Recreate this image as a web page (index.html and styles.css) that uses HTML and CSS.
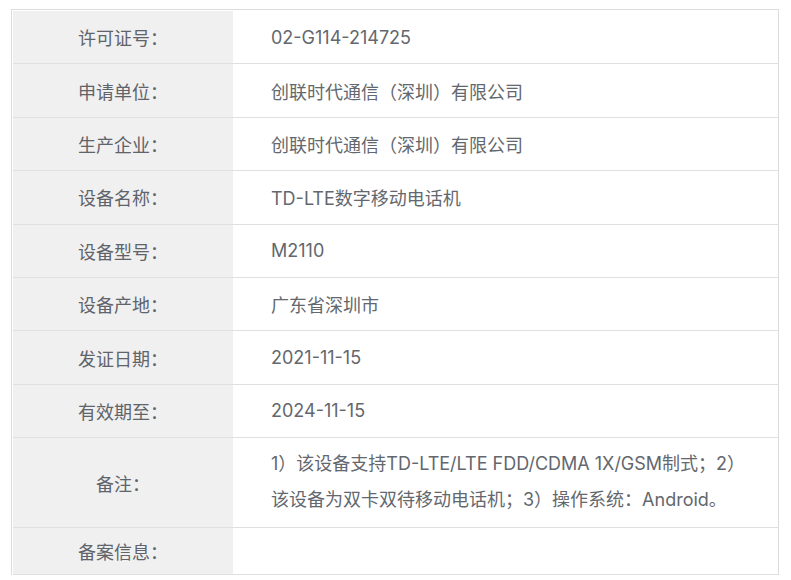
FILE: index.html
```html
<!DOCTYPE html>
<html lang="zh-CN">
<head>
<meta charset="utf-8">
<title>许可证信息</title>
<link rel="stylesheet" href="styles.css">
</head>
<body>
<div class="info">
  <div class="row"><div class="label">许可证号：</div><div class="value">02-G114-214725</div></div>
  <div class="row"><div class="label">申请单位：</div><div class="value">创联时代通信（深圳）有限公司</div></div>
  <div class="row"><div class="label">生产企业：</div><div class="value">创联时代通信（深圳）有限公司</div></div>
  <div class="row"><div class="label">设备名称：</div><div class="value">TD-LTE数字移动电话机</div></div>
  <div class="row"><div class="label">设备型号：</div><div class="value">M2110</div></div>
  <div class="row"><div class="label">设备产地：</div><div class="value">广东省深圳市</div></div>
  <div class="row"><div class="label">发证日期：</div><div class="value">2021-11-15</div></div>
  <div class="row"><div class="label">有效期至：</div><div class="value">2024-11-15</div></div>
  <div class="row row-note"><div class="label">备注：</div><div class="value">1）该设备支持TD-LTE/LTE FDD/CDMA 1X/GSM制式；2）该设备为双卡双待移动电话机；3）操作系统：Android。</div></div>
  <div class="row row-last"><div class="label">备案信息：</div><div class="value"></div></div>
</div>
</body>
</html>
```

FILE: styles.css
```css
html, body {
  margin: 0;
  padding: 0;
  background: #ffffff;
}

body {
  padding: 9px 10px 0 11px;
  font-family: "Inter", "Noto Sans CJK SC", sans-serif;
  font-size: 18px;
  font-weight: 400;
  color: #63676e;
}

.info {
  width: 768px;
  box-sizing: border-box;
  border: 1px solid #dcdcdc;
  border-bottom: none;
  padding: 1px 0 0 1px;
}

.row {
  display: grid;
  grid-template-columns: 220px 546px;
  column-gap: 1px;
  border-bottom: 1px solid #e0e0e0;
  height: 53.4px;
  box-sizing: border-box;
}

.label {
  background: #f0f0f0;
  display: flex;
  align-items: center;
  justify-content: center;
  color: #5f636a;
}

.value {
  display: flex;
  align-items: center;
  padding-left: 37px;
  padding-right: 20px;
}

.row-note {
  height: 90px;
}

.row-note .value {
  display: block;
  line-height: 36px;
  padding-top: 8px;
  padding-right: 20px;
}

.row-last {
  height: 47px;
}
```
